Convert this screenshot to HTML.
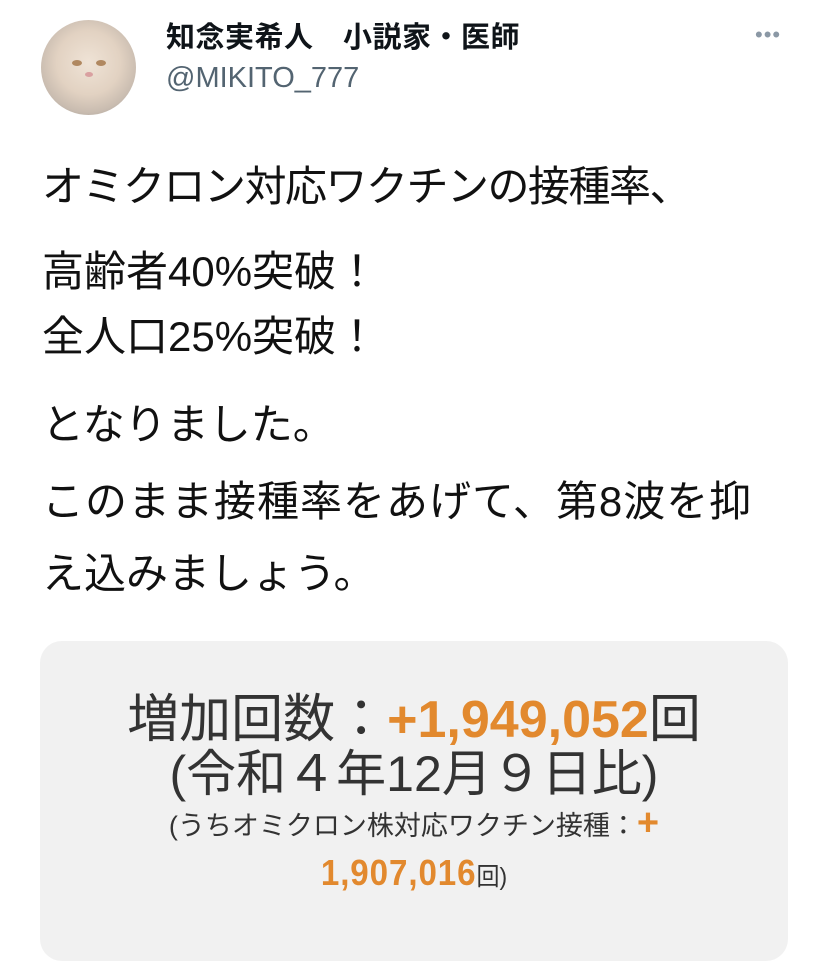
<!DOCTYPE html>
<html><head><meta charset="utf-8"><style>
body{margin:0;width:828px;height:928px;background:#fff;overflow:hidden;position:relative;font-family:"Liberation Sans","Noto Sans CJK JP",sans-serif;color:#0f1419}
.a{position:absolute;white-space:nowrap}
.t{font-size:42px;left:42px;line-height:50px;color:#111}
.c{position:absolute;left:40px;top:641px;width:748px;height:320px;background:#f1f1f1;border-radius:22px}
.o{color:#e2892e}
.ct{position:absolute;left:0;width:748px;text-align:center;color:#333;white-space:nowrap}
</style></head><body>
<div class="a" style="left:41px;top:20px;width:95px;height:95px;border-radius:50%;background:radial-gradient(circle at 50% 45%,#efe3d6 0,#e2d2c2 45%,#c9bcb0 70%,#8d8a88 100%)"></div>
<div class="a" style="left:72px;top:60px;width:10px;height:6px;border-radius:50%;background:#b08860"></div>
<div class="a" style="left:96px;top:60px;width:10px;height:6px;border-radius:50%;background:#b08860"></div>
<div class="a" style="left:85px;top:72px;width:8px;height:5px;border-radius:50%;background:#d9a0a0"></div>
<div class="a" style="left:166px;top:20px;font-size:29px;font-weight:bold;line-height:36px;letter-spacing:0.5px">知念実希人　小説家・医師</div>
<div class="a" style="left:166px;top:60px;font-size:29px;line-height:36px;color:#536471">@MIKITO_777</div>
<div class="a" style="left:755px;top:22px;font-size:22px;color:#8b98a5;letter-spacing:1px">•••</div>
<div class="a t" style="top:162px;letter-spacing:-1.5px">オミクロン対応ワクチンの接種率、</div>
<div class="a t" style="top:247px">高齢者40%突破！</div>
<div class="a t" style="top:312px">全人口25%突破！</div>
<div class="a t" style="top:400px">となりました。</div>
<div class="a t" style="top:477px;letter-spacing:1px">このまま接種率をあげて、第8波を抑</div>
<div class="a t" style="top:549px">え込みましょう。</div>
<div class="c">
<div class="ct" style="top:50px;font-size:52px;line-height:58px">増加回数：<span class="o" style="font-weight:bold">+1,949,052</span>回</div>
<div class="ct" style="top:106px;font-size:50px;line-height:54px">(令和４年12月９日比)</div>
<div class="ct" style="top:164px;font-size:27px;line-height:36px">(うちオミクロン株対応ワクチン接種：<span class="o" style="font-size:38px;font-weight:bold">+</span></div>
<div class="ct" style="top:210px;font-size:36px;line-height:44px;transform:scaleX(0.92)"><span class="o" style="font-weight:bold;letter-spacing:1px">1,907,016</span><span style="font-size:25px">回)</span></div>
</div>
</body></html>
